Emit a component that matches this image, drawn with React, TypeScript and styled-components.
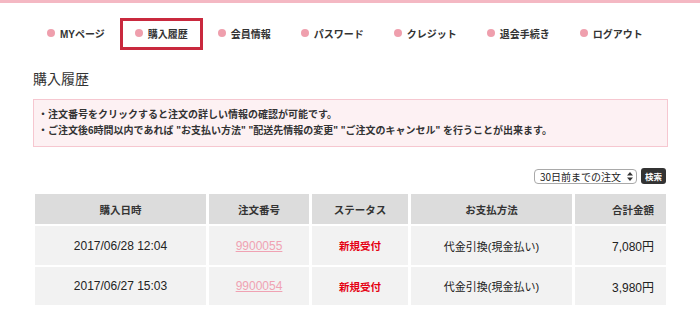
import React from "react";
import styled, { createGlobalStyle } from "styled-components";

const GlobalStyle = createGlobalStyle`
  body {
    margin: 0;
    background: #fff;
    color: #333;
    font-family: "Liberation Sans", "Noto Sans CJK JP", sans-serif;
  }
`;

const TopLine = styled.div`
  height: 3px;
  background-color: #f4b8c3;
`;

const Nav = styled.ul`
  list-style: none;
  display: flex;
  margin: 15px 0 0;
  padding: 0 0 0 32px;
`;

const NavItem = styled.li<{ $active?: boolean }>`
  display: flex;
  align-items: center;
  height: 26px;
  padding: 0 12px 2px;
  box-sizing: content-box;
  height: 24px;
  border: 3px solid ${(props) => (props.$active ? "#c9293e" : "transparent")};
  font-size: 10px;
  font-weight: bold;
  color: #333;
  white-space: nowrap;

  &::before {
    content: "";
    width: 8px;
    height: 8px;
    border-radius: 50%;
    background-color: #ef9fad;
    margin-right: 5px;
  }
`;

const Content = styled.div`
  padding: 0 32px 0 33px;
`;

const Title = styled.h1`
  margin: 19px 0 10px;
  font-size: 14px;
  line-height: 20px;
  font-weight: normal;
  color: #333;
`;

const Notice = styled.div`
  border: 1px solid #f6c7d0;
  background-color: #fdf1f3;
  padding: 7px 4px 7px 4px;
  font-size: 10px;
  line-height: 16px;
  font-weight: bold;
  color: #333;
`;

const Toolbar = styled.div`
  display: flex;
  justify-content: flex-end;
  align-items: center;
  gap: 4px;
  margin: 21px 0 8px;
  padding-right: 2px;
`;

const SelectWrap = styled.div`
  position: relative;
  display: flex;
`;

const Select = styled.select`
  appearance: none;
  height: 15px;
  padding: 0 14px 0 5px;
  border: 1px solid #a9a9a9;
  border-radius: 4px;
  background: #fff;
  font-family: "Noto Sans CJK JP", sans-serif;
  font-size: 10px;
  line-height: 13px;
  color: #222;
`;

const Arrows = styled.svg`
  position: absolute;
  right: 4px;
  top: 3px;
  pointer-events: none;
`;

const SearchButton = styled.button`
  height: 16px;
  padding: 0 4px;
  border: none;
  border-radius: 3px;
  background-color: #333;
  color: #fff;
  font-family: "Noto Sans CJK JP", sans-serif;
  font-size: 8.5px;
  font-weight: bold;
  line-height: 16px;
`;

const Table = styled.table`
  width: calc(100% + 2px);
  margin-left: -1px;
  border-collapse: separate;
  border-spacing: 3px 2px;
  font-size: 12px;
`;

const Th = styled.th<{ $align?: string }>`
  height: 30px;
  padding: 0 12px;
  background-color: #dcdcdc;
  font-family: "Noto Sans CJK JP", sans-serif;
  font-size: 10.5px;
  font-weight: bold;
  color: #333;
  text-align: ${(props) => props.$align || "center"};
`;

const Td = styled.td<{ $align?: string; $height: number }>`
  height: ${(props) => props.$height}px;
  padding: 0 12px;
  background-color: #f2f2f2;
  color: #222;
  text-align: ${(props) => props.$align || "center"};
`;

const OrderLink = styled.a`
  color: #f0a2b3;
  text-decoration: underline;
`;

const Status = styled.span`
  color: #e50012;
  font-weight: bold;
  font-size: 10.5px;
  font-family: "Noto Sans CJK JP", sans-serif;
`;

const Payment = styled.span`
  font-size: 11px;
  font-family: "Liberation Sans", "Noto Sans CJK JP", sans-serif;
`;

const menu = ["MYページ", "購入履歴", "会員情報", "パスワード", "クレジット", "退会手続き", "ログアウト"];

const orders = [
  { date: "2017/06/28 12:04", no: "9900055", status: "新規受付", pay: "代金引換(現金払い)", total: "7,080円", h: 39 },
  { date: "2017/06/27 15:03", no: "9900054", status: "新規受付", pay: "代金引換(現金払い)", total: "3,980円", h: 38 },
];

export default function App() {
  return (
    <>
      <GlobalStyle />
      <TopLine />
      <Nav>
        {menu.map((label) => (
          <NavItem key={label} $active={label === "購入履歴"}>
            {label}
          </NavItem>
        ))}
      </Nav>
      <Content>
        <Title>購入履歴</Title>
        <Notice>
          <div>・注文番号をクリックすると注文の詳しい情報の確認が可能です。</div>
          <div>
            ・ご注文後6時間以内であれば "お支払い方法" "配送先情報の変更" "ご注文のキャンセル" を行うことが出来ます。
          </div>
        </Notice>
        <Toolbar>
          <SelectWrap>
            <Select defaultValue="30">
              <option value="30">30日前までの注文</option>
            </Select>
            <Arrows width="6" height="9" viewBox="0 0 6 9">
              <path d="M0 3.5 L3 0 L6 3.5 Z M0 5.5 L3 9 L6 5.5 Z" fill="#333" />
            </Arrows>
          </SelectWrap>
          <SearchButton>検索</SearchButton>
        </Toolbar>
        <Table>
          <thead>
            <tr>
              <Th style={{ width: 147 }}>購入日時</Th>
              <Th style={{ width: 76 }}>注文番号</Th>
              <Th style={{ width: 72 }}>ステータス</Th>
              <Th style={{ width: 137 }}>お支払方法</Th>
              <Th $align="right">合計金額</Th>
            </tr>
          </thead>
          <tbody>
            {orders.map((o) => (
              <tr key={o.no}>
                <Td $height={o.h}>{o.date}</Td>
                <Td $height={o.h}>
                  <OrderLink href="#">{o.no}</OrderLink>
                </Td>
                <Td $height={o.h}>
                  <Status>{o.status}</Status>
                </Td>
                <Td $height={o.h}>
                  <Payment>{o.pay}</Payment>
                </Td>
                <Td $height={o.h} $align="right">
                  {o.total}
                </Td>
              </tr>
            ))}
          </tbody>
        </Table>
      </Content>
    </>
  );
}
